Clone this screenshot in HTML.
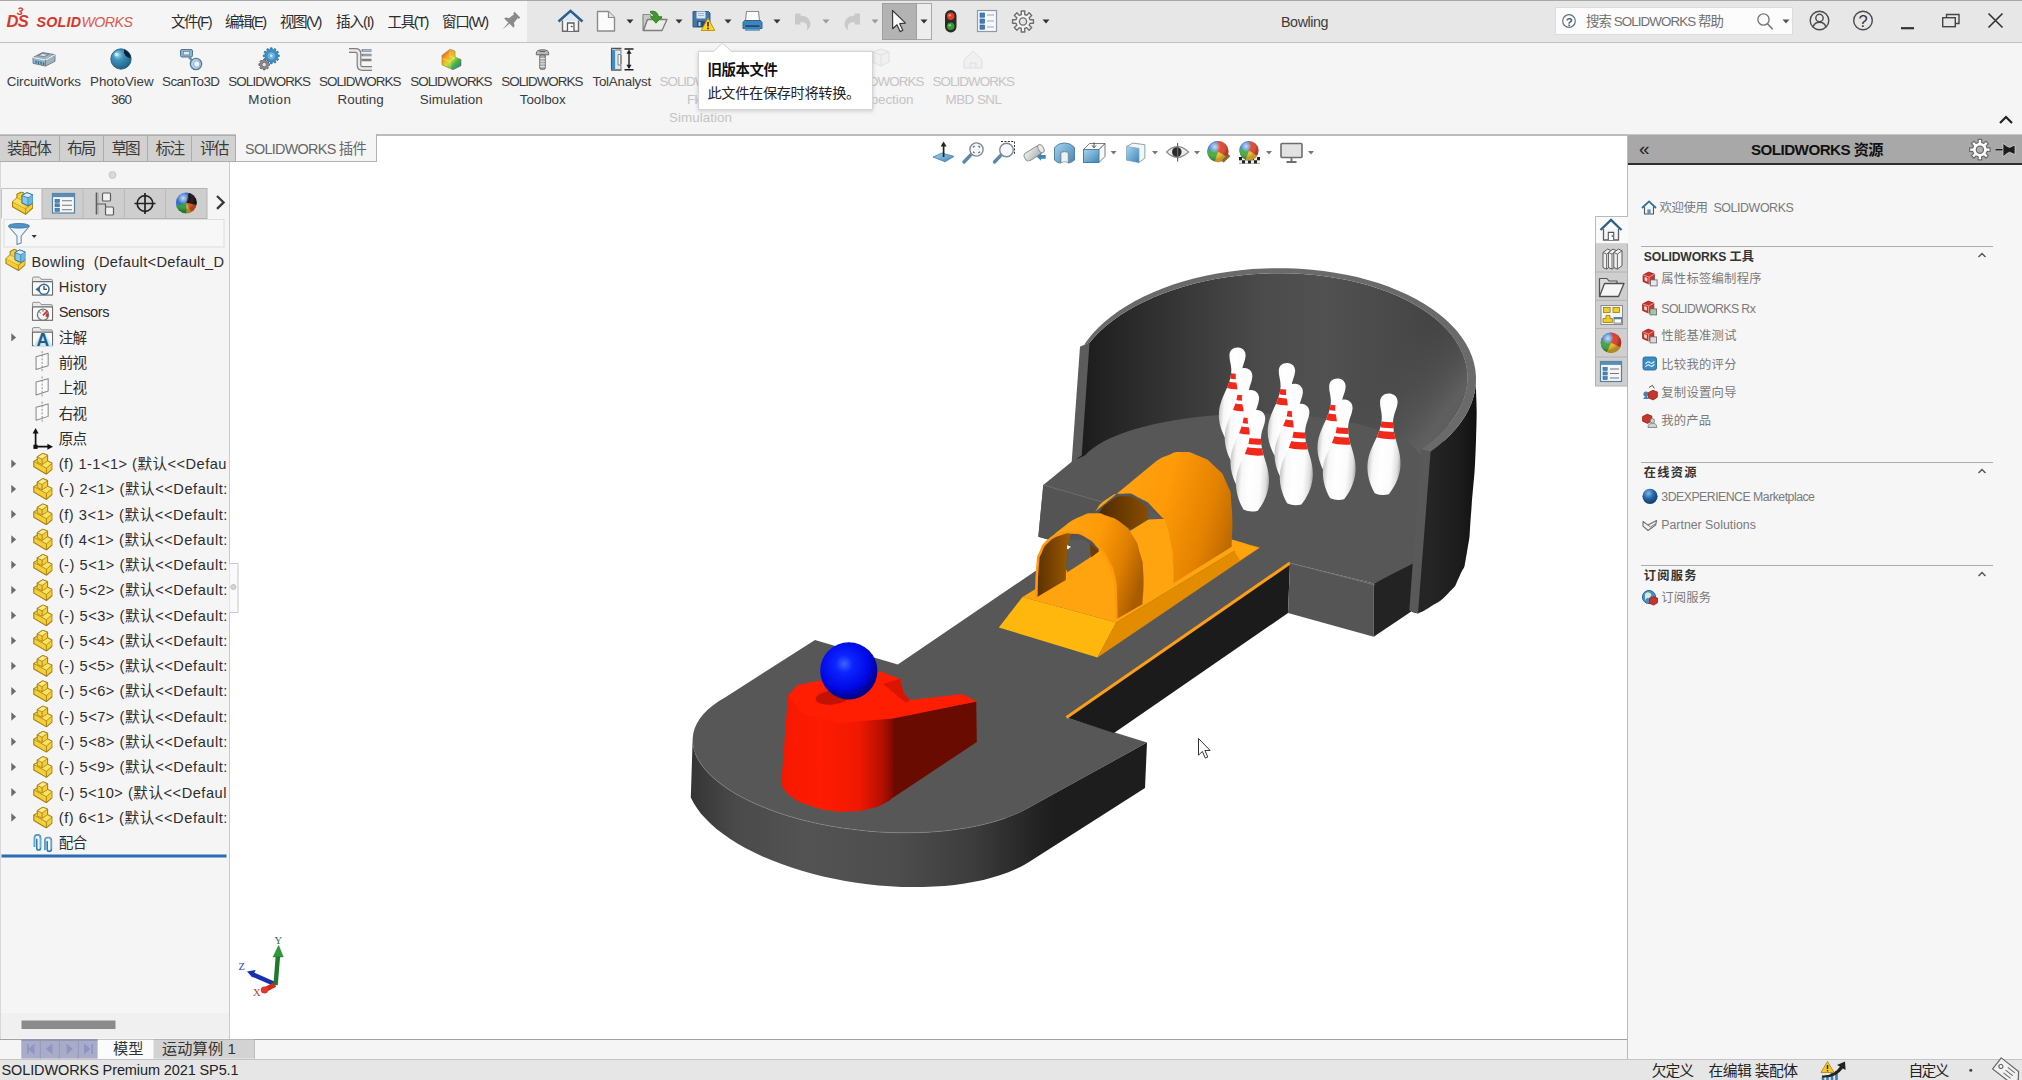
<!DOCTYPE html>
<html lang="zh-CN">
<head>
<meta charset="utf-8">
<title>SOLIDWORKS Premium 2021 - Bowling</title>
<style>
*{box-sizing:border-box;margin:0;padding:0}
html,body{width:2022px;height:1080px;overflow:hidden;background:#fff}
body{position:relative;font-family:"Liberation Sans","Noto Sans CJK SC",sans-serif;color:#333;font-size:14px}
.abs{position:absolute}
svg{position:absolute;overflow:visible}
.t{position:absolute;white-space:pre;line-height:20px;height:20px;display:block}
#titlebar{left:0;top:0;width:2022px;height:43px;background:#e7e7e7;border-top:1px solid #a8a8a8;border-bottom:1px solid #c2c2c2}
#titleleft{left:0;top:1px;width:527px;height:41px;background:#f5f5f5}
#search{left:1555px;top:7px;width:238px;height:28px;background:#fcfcfc;border:1px solid #dcdcdc}
#ribbon{left:0;top:43px;width:2022px;height:92px;background:#f5f5f5;border-bottom:1px solid #c6c6c6}
#tabrow{left:0;top:135px;width:230px;height:27px;background:#f5f5f5}
.tab{position:absolute;top:135px;height:27px;background:#d1d1d1;border:1px solid #acacac;border-left:none}
.tab.act{background:#f5f5f5;border-top:none;border-color:#b4b4b4;top:134px;height:28px}
#left{left:0;top:162px;width:230px;height:877px;background:#f5f5f5;border-right:1px solid #cacaca;border-left:1px solid #d8d8d8}
#view{left:230px;top:135px;width:1397px;height:904px;background:#fff}
#viewtop{left:376px;top:134px;width:1252px;height:2px;background:#bcbcbc}
#right{left:1627px;top:135px;width:395px;height:924px;background:#f6f6f6;border-left:1px solid #b9b9b9}
#rhead{left:1628px;top:135px;width:394px;height:30px;background:#a8a8a8;border-bottom:2px solid #2e2e2e}
.rsec{position:absolute;left:1641px;width:352px;height:1px;background:#adadad}
#btabs{left:0;top:1039px;width:1627px;height:20px;background:#f5f5f5;border-top:1px solid #a2a2a2}
#status{left:0;top:1059px;width:2022px;height:21px;background:#e6e6e6;border-top:1px solid #c4c4c4}
</style>
</head>
<body>
<div id="view" class="abs"></div>
<svg id="model" class="abs" style="left:0;top:0" width="2022" height="1080" viewBox="0 0 2022 1080"><defs>
<linearGradient id="gside" gradientUnits="userSpaceOnUse" x1="691" y1="0" x2="1147" y2="0"><stop offset="0" stop-color="#353535"/><stop offset="0.1" stop-color="#4a4a4a"/><stop offset="0.25" stop-color="#535353"/><stop offset="0.45" stop-color="#4d4d4d"/><stop offset="0.62" stop-color="#3c3c3c"/><stop offset="0.74" stop-color="#262626"/><stop offset="0.8" stop-color="#1d1d1d"/><stop offset="1" stop-color="#1d1d1d"/></linearGradient>
<linearGradient id="gwall" gradientUnits="userSpaceOnUse" x1="1085" y1="0" x2="1468" y2="0"><stop offset="0" stop-color="#1d1d1d"/><stop offset="0.12" stop-color="#2a2a2a"/><stop offset="0.28" stop-color="#3a3a3a"/><stop offset="0.45" stop-color="#4a4a4a"/><stop offset="0.62" stop-color="#515151"/><stop offset="0.85" stop-color="#474747"/><stop offset="1" stop-color="#3a3a3a"/></linearGradient>
<linearGradient id="gwallr" gradientUnits="userSpaceOnUse" x1="1400" y1="330" x2="1468" y2="380"><stop offset="0" stop-color="#4a4a4a" stop-opacity="0"/><stop offset="0.7" stop-color="#5a5a5a" stop-opacity="0.6"/><stop offset="1" stop-color="#626262" stop-opacity="0.9"/></linearGradient>
<linearGradient id="gwout" gradientUnits="userSpaceOnUse" x1="1430" y1="0" x2="1478" y2="0"><stop offset="0" stop-color="#252525"/><stop offset="0.6" stop-color="#1c1c1c"/><stop offset="1" stop-color="#101010"/></linearGradient>
<linearGradient id="gred" gradientUnits="userSpaceOnUse" x1="781" y1="0" x2="893" y2="0"><stop offset="0" stop-color="#f51800"/><stop offset="0.35" stop-color="#ff1c00"/><stop offset="0.7" stop-color="#f01800"/><stop offset="0.9" stop-color="#b51000"/><stop offset="1" stop-color="#7c0a00"/></linearGradient>
<radialGradient id="gball" cx="42%" cy="38%" r="62%"><stop offset="0" stop-color="#3f63ff"/><stop offset="0.25" stop-color="#0c24ff"/><stop offset="0.7" stop-color="#0008e6"/><stop offset="1" stop-color="#000080"/></radialGradient>
<linearGradient id="gor1" gradientUnits="userSpaceOnUse" x1="1095" y1="500" x2="1235" y2="540"><stop offset="0" stop-color="#ffa516"/><stop offset="0.45" stop-color="#ff9a08"/><stop offset="0.78" stop-color="#e48200"/><stop offset="1" stop-color="#b86600"/></linearGradient>
<linearGradient id="gor2" gradientUnits="userSpaceOnUse" x1="1050" y1="540" x2="1145" y2="570"><stop offset="0" stop-color="#ffa516"/><stop offset="0.45" stop-color="#ff9a08"/><stop offset="0.75" stop-color="#e08000"/><stop offset="1" stop-color="#a85c00"/></linearGradient>
<linearGradient id="gin1" gradientUnits="userSpaceOnUse" x1="1038" y1="0" x2="1070" y2="0"><stop offset="0" stop-color="#5e3200"/><stop offset="1" stop-color="#9c5a00"/></linearGradient>
<linearGradient id="gin2" gradientUnits="userSpaceOnUse" x1="1098" y1="0" x2="1150" y2="0"><stop offset="0" stop-color="#4e2a00"/><stop offset="1" stop-color="#8c4e00"/></linearGradient>
<linearGradient id="gpin" x1="0" y1="0" x2="1" y2="0"><stop offset="0" stop-color="#c6c6c6"/><stop offset="0.16" stop-color="#f7f7f7"/><stop offset="0.4" stop-color="#ffffff"/><stop offset="0.72" stop-color="#fbfbfb"/><stop offset="0.9" stop-color="#dedede"/><stop offset="1" stop-color="#a8a8a8"/></linearGradient>
<clipPath id="pinclip"><path id="pinpath" d="M0 0C5.2 0 8.8 3.4 8.8 8.6C8.8 14 6.2 18.5 5.8 24.5C5.4 30 6.4 36 9.2 44C13 54 16.5 62 16.5 72C16.5 84 11 95 7 100.5Q0 103 -7 100.5C-11 95 -16.5 84 -16.5 72C-16.5 62 -13 54 -9.2 44C-6.4 36 -5.4 30 -5.8 24.5C-6.2 18.5 -8.8 14 -8.8 8.6C-8.8 3.4 -5.2 0 0 0Z"/></clipPath>
<g id="pin"><path d="M0 0C5.2 0 8.8 3.4 8.8 8.6C8.8 14 6.2 18.5 5.8 24.5C5.4 30 6.4 36 9.2 44C13 54 16.5 62 16.5 72C16.5 84 11 95 7 100.5Q0 103 -7 100.5C-11 95 -16.5 84 -16.5 72C-16.5 62 -13 54 -9.2 44C-6.4 36 -5.4 30 -5.8 24.5C-6.2 18.5 -8.8 14 -8.8 8.6C-8.8 3.4 -5.2 0 0 0Z" fill="url(#gpin)"/><g clip-path="url(#pinclip)"><path d="M-12 27.5q12 2.4 24 0v6q-12 2.4-24 0zM-12 37q12 2.6 24 0v7.4q-12 2.6-24 0z" fill="#f2281a"/></g></g>
</defs><path d="M815 640 L897.8 664.4 L1071.8 546.3 L1038.3 536.7 L1043.3 485 L1071.7 461.7 L1092 400 L1200 335 L1400 335 L1455 400 L1428 500 L1416 564 L1373.7 583.5 L1290 563 L1066.5 717.5 L1147 742.5 L1028.2 808.1 L1021.2 811.7 L1013.6 815.0 L1005.5 818.1 L996.8 820.9 L987.6 823.5 L978.0 825.7 L967.9 827.7 L957.5 829.3 L946.8 830.7 L935.7 831.7 L924.5 832.4 L913.0 832.7 L901.4 832.8 L889.6 832.5 L877.9 831.9 L866.1 830.9 L854.3 829.6 L842.7 828.1 L831.2 826.2 L819.8 824.0 L808.7 821.5 L797.9 818.7 L787.4 815.7 L777.3 812.4 L767.6 808.8 L758.3 805.1 L749.5 801.1 L741.3 796.9 L733.6 792.5 L726.5 788.0 L720.0 783.3 L714.1 778.5 L708.9 773.6 L704.4 768.6 L700.6 763.5 L697.5 758.4 L695.2 753.3 L693.6 748.2 L692.8 743.1 L692.7 738.0 L693.4 733.0 L694.8 728.1 L697.0 723.2 L699.9 718.5 L703.5 714.0 L707.9 709.6 L712.9 705.4 L718.6 701.3 L725.0 697.5 Z" fill="#575757"/><path d="M692.7 738.0 L690.8 797.5 L693.5 802.8 L696.9 808.1 L700.8 813.4 L705.5 818.6 L710.7 823.8 L716.5 828.9 L722.9 833.8 L729.9 838.7 L737.4 843.4 L745.3 847.9 L753.8 852.2 L762.6 856.4 L771.9 860.3 L781.6 864.0 L791.6 867.5 L801.8 870.8 L812.4 873.7 L823.1 876.4 L834.1 878.8 L845.2 880.9 L856.3 882.8 L867.6 884.3 L878.8 885.5 L890.1 886.3 L901.2 886.9 L912.3 887.1 L923.2 887.1 L933.9 886.6 L944.4 885.9 L954.6 884.9 L964.6 883.5 L974.2 881.8 L983.4 879.9 L992.2 877.6 L1000.5 875.0 L1008.4 872.2 L1015.8 869.1 L1022.7 865.7 L1029.0 862.1 L1145 788 L1147 742.5 L1028.2 808.1 L1021.2 811.7 L1013.6 815.0 L1005.5 818.1 L996.8 820.9 L987.6 823.5 L978.0 825.7 L967.9 827.7 L957.5 829.3 L946.8 830.7 L935.7 831.7 L924.5 832.4 L913.0 832.7 L901.4 832.8 L889.6 832.5 L877.9 831.9 L866.1 830.9 L854.3 829.6 L842.7 828.1 L831.2 826.2 L819.8 824.0 L808.7 821.5 L797.9 818.7 L787.4 815.7 L777.3 812.4 L767.6 808.8 L758.3 805.1 L749.5 801.1 L741.3 796.9 L733.6 792.5 L726.5 788.0 L720.0 783.3 L714.1 778.5 L708.9 773.6 L704.4 768.6 L700.6 763.5 L697.5 758.4 L695.2 753.3 L693.6 748.2 L692.8 743.1 L692.7 738.0 Z" fill="url(#gside)"/><path d="M1005.5 818.1 L996.8 820.9 L987.6 823.5 L978.0 825.7 L967.9 827.7 L957.5 829.3 L946.8 830.7 L935.7 831.7 L924.5 832.4 L913.0 832.7 L901.4 832.8 L889.6 832.5 L877.9 831.9 L866.1 830.9 L854.3 829.6 L842.7 828.1 L831.2 826.2 L819.8 824.0 L808.7 821.5 L797.9 818.7 L787.4 815.7 L777.3 812.4 L767.6 808.8 L758.3 805.1 L749.5 801.1 L741.3 796.9 L733.6 792.5 L726.5 788.0 L720.0 783.3 L714.1 778.5 L708.9 773.6 L704.4 768.6 L700.6 763.5 L697.5 758.4 L695.2 753.3" fill="none" stroke="#8c8c8c" stroke-opacity="0.5" stroke-width="1"/><path d="M1066.5 717.5L1290 563L1288 613L1114 733Z" fill="#1b1b1b"/><path d="M1066.5 717.5L1290 563" stroke="#ff9d14" stroke-width="3"/><path d="M1290 563L1373.7 583.5L1373.7 636.7L1288 613Z" fill="#555"/><path d="M1373.7 583.5L1414 563L1412 611L1373.7 636.7Z" fill="#232323"/><path d="M1290 563L1375 585" stroke="#777" stroke-width="0.8"/><path d="M1043.3 485L1130 510L1130 566L1071.8 546.3L1038.3 536.7Z" fill="#545454"/><path d="M1043.3 485L1130 510" stroke="#747474" stroke-width="0.8"/><path d="M1089.5 342.8 L1094.5 336.9 L1100.0 331.2 L1106.2 325.7 L1112.9 320.4 L1120.1 315.3 L1127.8 310.4 L1136.0 305.8 L1144.7 301.4 L1153.8 297.3 L1163.2 293.4 L1173.0 289.9 L1183.2 286.7 L1193.6 283.8 L1204.3 281.3 L1215.2 279.0 L1226.3 277.2 L1237.5 275.7 L1248.9 274.5 L1260.3 273.7 L1271.7 273.3 L1283.2 273.2 L1294.6 273.6 L1305.9 274.2 L1317.1 275.3 L1328.1 276.7 L1338.9 278.4 L1349.5 280.5 L1359.9 283.0 L1369.9 285.8 L1379.6 288.9 L1388.9 292.3 L1397.8 296.0 L1406.3 300.1 L1414.4 304.4 L1421.9 308.9 L1429.0 313.7 L1435.5 318.8 L1441.4 324.0 L1446.8 329.5 L1451.6 335.1 L1455.8 340.9 L1459.3 346.9 L1462.2 352.9 L1464.5 359.1 L1466.1 365.3 L1467.1 371.6 L1467.4 377.9 L1467.0 384.3 L1466.0 390.6 L1464.3 396.9 L1462.0 403.2 L1459.0 409.4 L1455.3 415.5 L1451.1 421.5 L1446.2 427.4 L1440.8 433.1 L1434.8 438.7 L1428.2 444.0 L1421.1 449.2 L1416.0 560.0 L1421.7 457.5 L1419.4 453.8 L1416.3 450.2 L1412.4 446.7 L1407.7 443.3 L1402.3 440.0 L1396.1 436.8 L1389.2 433.8 L1381.7 431.0 L1373.5 428.3 L1364.7 425.8 L1355.3 423.5 L1345.5 421.5 L1335.2 419.7 L1324.4 418.1 L1313.4 416.7 L1302.0 415.6 L1290.3 414.8 L1278.5 414.2 L1266.6 413.8 L1254.5 413.8 L1242.5 414.0 L1230.5 414.4 L1218.6 415.1 L1206.8 416.1 L1195.3 417.3 L1184.1 418.8 L1173.1 420.5 L1162.6 422.5 L1152.5 424.6 L1142.9 427.0 L1133.8 429.6 L1125.2 432.3 L1117.3 435.2 L1110.1 438.3 L1103.5 441.6 L1097.7 444.9 L1092.6 448.4 L1088.3 451.9 L1084.8 455.6 L1077.0 459.0 L1085.0 345.0Z" fill="url(#gwall)"/><path d="M1089.5 342.8 L1094.5 336.9 L1100.0 331.2 L1106.2 325.7 L1112.9 320.4 L1120.1 315.3 L1127.8 310.4 L1136.0 305.8 L1144.7 301.4 L1153.8 297.3 L1163.2 293.4 L1173.0 289.9 L1183.2 286.7 L1193.6 283.8 L1204.3 281.3 L1215.2 279.0 L1226.3 277.2 L1237.5 275.7 L1248.9 274.5 L1260.3 273.7 L1271.7 273.3 L1283.2 273.2 L1294.6 273.6 L1305.9 274.2 L1317.1 275.3 L1328.1 276.7 L1338.9 278.4 L1349.5 280.5 L1359.9 283.0 L1369.9 285.8 L1379.6 288.9 L1388.9 292.3 L1397.8 296.0 L1406.3 300.1 L1414.4 304.4 L1421.9 308.9 L1429.0 313.7 L1435.5 318.8 L1441.4 324.0 L1446.8 329.5 L1451.6 335.1 L1455.8 340.9 L1459.3 346.9 L1462.2 352.9 L1464.5 359.1 L1466.1 365.3 L1467.1 371.6 L1467.4 377.9 L1467.0 384.3 L1466.0 390.6 L1464.3 396.9 L1462.0 403.2 L1459.0 409.4 L1455.3 415.5 L1451.1 421.5 L1446.2 427.4 L1440.8 433.1 L1434.8 438.7 L1428.2 444.0 L1421.1 449.2 L1416.0 560.0 L1421.7 457.5 L1419.4 453.8 L1416.3 450.2 L1412.4 446.7 L1407.7 443.3 L1402.3 440.0 L1396.1 436.8 L1389.2 433.8 L1381.7 431.0 L1373.5 428.3 L1364.7 425.8 L1355.3 423.5 L1345.5 421.5 L1335.2 419.7 L1324.4 418.1 L1313.4 416.7 L1302.0 415.6 L1290.3 414.8 L1278.5 414.2 L1266.6 413.8 L1254.5 413.8 L1242.5 414.0 L1230.5 414.4 L1218.6 415.1 L1206.8 416.1 L1195.3 417.3 L1184.1 418.8 L1173.1 420.5 L1162.6 422.5 L1152.5 424.6 L1142.9 427.0 L1133.8 429.6 L1125.2 432.3 L1117.3 435.2 L1110.1 438.3 L1103.5 441.6 L1097.7 444.9 L1092.6 448.4 L1088.3 451.9 L1084.8 455.6 L1077.0 459.0 L1085.0 345.0Z" fill="url(#gwallr)"/><path d="M1476.0 376.2 L1475.9 382.9 L1475.2 389.6 L1473.7 396.3 L1471.5 402.9 L1468.7 409.5 L1465.2 415.9 L1461.0 422.3 L1456.1 428.5 L1450.6 434.5 L1444.6 440.3 L1437.9 446.0 L1430.6 451.4 L1424 452 L1412 612 L1418 613.5 C1422.0 611.3 1420.1 613.6 1430.0 607.0 C1439.9 600.4 1437.9 604.0 1447.8 593.7 C1457.7 583.4 1453.2 589.9 1459.6 576.0 C1466.0 562.1 1463.0 574.7 1467.0 552.0 C1471.0 529.3 1468.5 545.1 1471.5 507.8 C1474.5 470.5 1474.5 481.2 1476.0 440.0 C1477.5 398.8 1476.0 402.8 1476.0 384.2 Z" fill="url(#gwout)"/><path d="M1421.1 449.2L1430.6 451.4L1418 613.5L1409.3 610.5Z" fill="#595959"/><path d="M1080.0 346.7 L1083.2 346.2 L1087.5 339.9 L1092.5 333.8 L1098.2 327.8 L1104.4 322.0 L1111.2 316.4 L1118.6 311.0 L1126.6 305.9 L1135.0 301.0 L1143.9 296.5 L1153.3 292.2 L1163.1 288.2 L1173.3 284.6 L1183.8 281.3 L1194.7 278.3 L1205.8 275.7 L1217.2 273.5 L1228.7 271.7 L1240.4 270.2 L1252.3 269.1 L1264.2 268.5 L1276.1 268.2 L1288.0 268.3 L1299.9 268.8 L1311.7 269.7 L1323.4 271.0 L1334.8 272.7 L1346.1 274.7 L1357.1 277.1 L1367.9 279.9 L1378.3 283.1 L1388.3 286.6 L1397.9 290.4 L1407.1 294.5 L1415.9 299.0 L1424.1 303.7 L1431.8 308.7 L1439.0 314.0 L1445.6 319.5 L1451.6 325.2 L1457.0 331.1 L1461.7 337.2 L1465.8 343.4 L1469.2 349.8 L1471.9 356.3 L1474.0 362.9 L1475.3 369.5 L1476.0 376.2 L1475.9 382.9 L1475.2 389.6 L1473.7 396.3 L1471.5 402.9 L1468.7 409.5 L1465.2 415.9 L1461.0 422.3 L1456.1 428.5 L1450.6 434.5 L1444.6 440.3 L1437.9 446.0 L1430.6 451.4 L1421.1 449.2 L1428.2 444.0 L1434.8 438.7 L1440.8 433.1 L1446.2 427.4 L1451.1 421.5 L1455.3 415.5 L1459.0 409.4 L1462.0 403.2 L1464.3 396.9 L1466.0 390.6 L1467.0 384.3 L1467.4 377.9 L1467.1 371.6 L1466.1 365.3 L1464.5 359.1 L1462.2 352.9 L1459.3 346.9 L1455.8 340.9 L1451.6 335.1 L1446.8 329.5 L1441.4 324.0 L1435.5 318.8 L1429.0 313.7 L1421.9 308.9 L1414.4 304.4 L1406.3 300.1 L1397.8 296.0 L1388.9 292.3 L1379.6 288.9 L1369.9 285.8 L1359.9 283.0 L1349.5 280.5 L1338.9 278.4 L1328.1 276.7 L1317.1 275.3 L1305.9 274.2 L1294.6 273.6 L1283.2 273.2 L1271.7 273.3 L1260.3 273.7 L1248.9 274.5 L1237.5 275.7 L1226.3 277.2 L1215.2 279.0 L1204.3 281.3 L1193.6 283.8 L1183.2 286.7 L1173.0 289.9 L1163.2 293.4 L1153.8 297.3 L1144.7 301.4 L1136.0 305.8 L1127.8 310.4 L1120.1 315.3 L1112.9 320.4 L1106.2 325.7 L1100.0 331.2 L1094.5 336.9 L1089.5 342.8Z" fill="#6a6a6a"/><path d="M1080 346.7 L1089.5 342.8 L1081.7 455.5L1071.7 461.7Z" fill="#5c5c5c"/><use href="#pin" transform="translate(1238.0 347.5) rotate(3.4) scale(0.92)"/><use href="#pin" transform="translate(1287.5 363.0) rotate(3.8) scale(0.93)"/><use href="#pin" transform="translate(1338.0 378.5) rotate(4.2) scale(0.94)"/><use href="#pin" transform="translate(1244.5 368.0) rotate(3.4) scale(0.95)"/><use href="#pin" transform="translate(1295.0 383.8) rotate(3.8) scale(0.96)"/><use href="#pin" transform="translate(1389.5 393.5) rotate(4.4) scale(1)"/><use href="#pin" transform="translate(1251.0 390.0) rotate(3.52) scale(0.98)"/><use href="#pin" transform="translate(1344.5 399.5) rotate(4.24) scale(0.99)"/><use href="#pin" transform="translate(1301.2 403.8) rotate(3.88) scale(1)"/><use href="#pin" transform="translate(1257.0 410.0) rotate(3.6) scale(1)"/><path d="M1022.5 597.0 L1116.2 622.5 L1246.2 543.8 L1153.8 516.2Z" fill="#ffa30f"/><path d="M998.8 627.5 L1022.5 597.0 L1116.2 622.5 L1097.5 657.5Z" fill="#ffb70d"/><path d="M1116.2 622.5 L1097.5 657.5 L1260.0 547.5 L1246.2 543.8Z" fill="#e48c00"/><path d="M1231.7 546.7 L1232.5 540.0 L1258.7 548.0 L1240.0 560.3Z" fill="#ffa30f"/><path d="M1095.0 511.7 C1098.9 507.5 1097.2 505.2 1106.7 499.2 C1116.1 493.2 1112.2 493.9 1123.3 493.7 C1134.4 493.4 1129.4 492.9 1140.0 498.3 C1150.6 503.8 1146.7 501.1 1155.0 510.0 C1163.3 518.9 1159.7 513.9 1165.0 525.0 C1170.3 536.1 1168.1 530.0 1170.8 543.3 C1173.6 556.7 1172.5 551.7 1173.3 565.0 C1174.2 578.3 1173.3 577.2 1173.3 583.3 L1231.7 546.7 C1231.7 533.3 1233.3 527.8 1231.7 506.7 C1230.0 485.6 1232.2 496.7 1226.7 483.3 C1221.1 470.0 1224.4 475.8 1215.0 466.7 C1205.6 457.5 1209.4 460.7 1198.3 455.8 C1187.2 450.9 1192.2 452.0 1181.7 452.0 C1171.1 452.0 1175.0 452.9 1166.7 455.8 C1158.3 458.8 1160.0 459.2 1156.7 460.8 Z" fill="url(#gor1)"/><path d="M1135.0 530.0 L1148.3 519.7 L1164.2 518.7 L1169.2 533.3 L1172.0 556.7 L1172.8 583.0 L1142.5 604.2 L1142.5 573.3 L1140.0 553.3 L1134.2 537.5Z" fill="#ffa30f"/><path d="M1098.0 514.2 C1102.0 509.9 1101.0 507.3 1110.0 501.3 C1119.0 495.4 1115.6 496.7 1125.0 496.3 C1134.4 496.0 1130.6 495.8 1138.3 500.3 C1146.1 504.9 1145.0 506.8 1148.3 510.0 L1148.0 519.3 L1131.7 529.2 L1121.7 523.3 L1106.7 515.8 Z" fill="url(#gin2)"/><path d="M1148.7 509.0 L1164.2 518.7 L1148.3 519.5Z" fill="#5b5b5b"/><path d="M1048.3 540.8 C1052.2 538.6 1051.7 536.9 1060.0 534.2 C1068.3 531.4 1064.4 531.7 1073.3 532.5 C1082.2 533.3 1078.3 531.9 1086.7 536.7 C1095.0 541.4 1091.1 538.3 1098.3 546.7 C1105.6 555.0 1103.1 551.1 1108.3 561.7 C1113.6 572.2 1111.7 566.1 1114.2 578.3 C1116.7 590.6 1115.2 584.7 1115.8 598.3 C1116.5 611.9 1116.1 612.2 1116.2 619.2 L1142.5 604.2 C1142.8 593.9 1144.2 590.3 1143.3 573.3 C1142.5 556.4 1143.3 565.6 1140.0 553.3 C1136.7 541.1 1139.4 546.7 1133.3 536.7 C1127.2 526.7 1130.6 530.3 1121.7 523.3 C1112.8 516.4 1115.6 519.2 1106.7 515.8 C1097.8 512.5 1103.9 513.1 1095.0 513.3 C1086.1 513.6 1091.1 511.7 1080.0 516.7 C1068.9 521.7 1072.2 520.3 1061.7 528.3 C1051.1 536.4 1052.8 536.7 1048.3 540.8 Z" fill="url(#gor2)"/><path d="M1068.3 540.0 L1083.3 539.5 L1090.0 543.7 L1090.8 557.0 L1067.0 572.5Z" fill="#5b5b5b"/><path d="M1090.0 543.7 L1099.2 551.3 L1092.0 556.7 L1090.8 557.0Z" fill="#6d3c00"/><path d="M1036.3 597.5 C1036.7 587.2 1036.0 581.9 1037.5 566.7 C1039.0 551.4 1037.2 560.3 1040.8 551.7 C1044.4 543.1 1041.9 546.7 1048.3 540.8 C1054.7 535.0 1052.5 536.8 1060.0 534.2 C1067.5 531.5 1067.2 533.3 1070.8 532.8 L1067.0 548.3 L1065.8 580.0 Z" fill="url(#gin1)"/><path d="M1067.0 545.3 L1071.0 546.8 L1068.0 549.3Z" fill="#fff"/><path d="M1036.3 597.5 C1036.7 587.2 1036.0 581.9 1037.5 566.7 C1039.0 551.4 1037.2 560.3 1040.8 551.7 C1044.4 543.1 1041.9 546.7 1048.3 540.8 C1054.7 535.0 1051.7 536.9 1060.0 534.2 C1068.3 531.4 1064.4 531.7 1073.3 532.5 C1082.2 533.3 1078.3 531.9 1086.7 536.7 C1095.0 541.4 1091.1 538.3 1098.3 546.7 C1105.6 555.0 1103.1 551.1 1108.3 561.7 C1113.6 572.2 1111.7 566.1 1114.2 578.3 C1116.7 590.6 1115.2 584.7 1115.8 598.3 C1116.5 611.9 1116.1 612.2 1116.2 619.2" fill="none" stroke="#ff9a0a" stroke-width="2.6"/><path d="M892.5 718.0 L976.2 701.5 L976.8 742.0 L892.5 798.0Z" fill="#6a0b00"/><path d="M788.0 695.0 L781.2 785.0 C785.0 789.2 782.9 790.7 792.5 797.5 C802.1 804.3 797.5 801.2 810.0 805.5 C822.5 809.8 816.7 808.5 830.0 810.5 C843.3 812.5 836.7 812.1 850.0 811.5 C863.3 810.9 858.3 811.6 870.0 808.8 C881.7 805.9 877.3 806.8 885.0 803.0 C892.7 799.2 890.3 799.3 893.0 797.5 L893.0 718.0 Z" fill="url(#gred)"/><path d="M788.0 695.5 L797.5 685.0 L820.0 680.5 L880.0 671.2 L900.0 678.8 L903.8 693.8 L910.0 700.0 L962.5 694.0 L976.8 701.5 L893.0 718.5 L840.0 723.0 L805.0 715.0Z" fill="#ff1e02"/><path d="M883.0 684.0 L900.0 678.8 L903.8 693.8 L910.0 700.0 L906.2 703.0Z" fill="#d91400"/><ellipse cx="832.5" cy="697.5" rx="17" ry="7" fill="#c41200" transform="rotate(-6 832.5 697.5)"/><circle cx="848.8" cy="670.8" r="28.6" fill="url(#gball)"/></svg>
<svg class="abs" style="left:0;top:0" width="2022" height="1080" viewBox="0 0 2022 1080"><g><path d="M274.6 984l-22-9.5" stroke="#1a2fb0" stroke-width="4.6"/><path d="M247 971.5l8.6-1.4-3.2 7.4z" fill="#1a2fb0"/><path d="M275 984.5l-9.5 5" stroke="#d02a1c" stroke-width="5"/><circle cx="264.4" cy="990" r="3.6" fill="#e0382a"/><path d="M275.6 985l2.4-30" stroke="#1e7a2a" stroke-width="4.4"/><path d="M278.6 945.5l-5.4 11.4h10z" fill="#2f9a3a" stroke="#1e7a2a" stroke-width="0.6"/></g><path d="M1198.5 738.5v16.6l3.9-3.6 2.9 6.6 2.5-1.1-2.9-6.5h5.3z" fill="#fff" stroke="#333" stroke-width="1" stroke-linejoin="round"/></svg>
<span class="t" style="left:274.5px;top:931.0px;font-size:10.5px;color:#2c6a33;font-family:'Liberation Serif',serif;">Y</span>
<span class="t" style="left:238.6px;top:957.4px;font-size:10.5px;color:#2a3fb8;font-family:'Liberation Serif',serif;">Z</span>
<span class="t" style="left:253px;top:982.8px;font-size:10.5px;color:#c8392b;font-family:'Liberation Serif',serif;">X</span>
<div id="titlebar" class="abs"></div><div id="titleleft" class="abs"></div><div id="search" class="abs"></div>
<span class="t" style="left:17px;top:0.7px;font-size:11px;color:#d43a2f;font-weight:bold;font-style:italic;transform:rotate(8deg);">3</span>
<span class="t" style="left:6.5px;top:11.3px;font-size:16.5px;color:#d43a2f;font-weight:bold;font-style:italic;letter-spacing:-0.6px;">DS</span>
<span class="t" style="left:36.5px;top:12.3px;font-size:14.2px;color:#d9342a;font-weight:bold;font-style:italic;letter-spacing:0.29px;">SOLID</span>
<span class="t" style="left:81.5px;top:12.3px;font-size:14.2px;color:#dc5a50;font-style:italic;letter-spacing:-0.53px;">WORKS</span>
<span class="t" style="left:171px;top:12.2px;font-size:14.6px;color:#2c2c2c;letter-spacing:-1.58px;">文件(F)</span>
<span class="t" style="left:225px;top:12.2px;font-size:14.6px;color:#2c2c2c;letter-spacing:-1.66px;">编辑(E)</span>
<span class="t" style="left:280px;top:12.2px;font-size:14.6px;color:#2c2c2c;letter-spacing:-1.54px;">视图(V)</span>
<span class="t" style="left:336px;top:12.2px;font-size:14.6px;color:#2c2c2c;letter-spacing:-1.12px;">插入(I)</span>
<span class="t" style="left:387.5px;top:12.2px;font-size:14.6px;color:#2c2c2c;letter-spacing:-1.46px;">工具(T)</span>
<span class="t" style="left:442px;top:12.2px;font-size:14.6px;color:#2c2c2c;letter-spacing:-1.42px;">窗口(W)</span>
<svg class="abs" style="left:0;top:0" width="2022" height="43" viewBox="0 0 2022 43"><g transform="translate(511,21) rotate(45)" fill="#8a8a8a"><path d="M-4 -9h8v2h-1.3l0.8 6.5q3 1.2 3.2 3.5h-13.4q0.2-2.3 3.2-3.5l0.8-6.5h-1.3z"/><path d="M-0.8 3h1.6l-0.8 9z"/></g><g><path d="M562.5 20.5v10.8h16v-10.8" fill="#f4f7fa" stroke="#6b6b6b" stroke-width="1.4"/><path d="M558.5 21.5l12-10.5 12 10.5" fill="none" stroke="#2f5f8d" stroke-width="2.6" stroke-linejoin="miter"/><path d="M570.5 12.8l-7.3 6.6v1.6h14.6v-1.6z" fill="#dce9f5"/><path d="M567.5 31v-8h6.5v8" fill="#fff" stroke="#5a5a5a" stroke-width="1.3"/><path d="M570.8 26.5h1.8" stroke="#444" stroke-width="1.3"/></g><path d="M597.5 11.5h11l6 6v13.5h-17z" fill="#fbfbfb" stroke="#8b8b8b" stroke-width="1.4" stroke-linejoin="round"/><path d="M608.5 11.5v6h6" fill="#e4e4e4" stroke="#8b8b8b" stroke-width="1.2"/><path d="M626.5 19.5h7l-3.5 4z" fill="#333"/><path d="M643 14.5h7l2 2.5h9.5v3h-14l-4.5 10.5z" fill="#c9c9c9" stroke="#8a8a8a" stroke-width="1.2" stroke-linejoin="round"/><path d="M647.5 19.5h19.5l-5 11h-18.5z" fill="#e9ede6" stroke="#7d7d7d" stroke-width="1.3" stroke-linejoin="round"/><path d="M650.5 11.2q7-0.8 8 5.6h3.3l-5.8 6.4-5.6-6.4h3.4q-0.4-3.4-3.3-3.9z" fill="#3d9a2d" stroke="#2b7a1f" stroke-width="0.8"/><path d="M675.5 19.5h7l-3.5 4z" fill="#333"/><path d="M693 11.5h15.5l1.5 1.5v14h-17z" fill="#3f78a8" stroke="#2d5f8b" stroke-width="1"/><rect x="696.5" y="11.5" width="9" height="7" fill="#dfe6ee"/><path d="M698 13.5h6M698 15.5h6" stroke="#9bb0c4" stroke-width="0.9"/><rect x="697" y="21" width="8" height="6" fill="#2a4f73"/><rect x="698.5" y="22" width="2" height="4" fill="#c8d4e0"/><path d="M708 18.2l6.8 12.3h-13.6z" fill="#ffd32a" stroke="#b98d00" stroke-width="0.9" stroke-linejoin="round"/><path d="M708 22v4.4" stroke="#222" stroke-width="1.5"/><circle cx="708" cy="28.4" r="0.9" fill="#222"/><path d="M724.5 19.5h7l-3.5 4z" fill="#333"/><path d="M746.5 11.5h12l1 9h-14z" fill="#fdfdfd" stroke="#8e8e8e" stroke-width="1.1"/><path d="M744.5 20.5h16l1.5 2v6h-19v-6z" fill="#3d86bd" stroke="#2a6593" stroke-width="1"/><rect x="745.5" y="25.2" width="14" height="1.8" fill="#1d4d75"/><rect x="745" y="28.5" width="15" height="2.3" fill="#5d9ccc"/><path d="M773.5 19.5h7l-3.5 4z" fill="#333"/><g fill="#c9c9c9"><path d="M795 13.5h5.5v2.2q8.5-0.6 10 7.8 0 4.2-3.6 6.8 1.2-3.2-0.2-5.6-1.8-2.8-6.2-2.6v2.4h-5.5z"/><path d="M860 13.5h-5.5v2.2q-8.5-0.6-10 7.8 0 4.2 3.6 6.8-1.2-3.2 0.2-5.6 1.8-2.8 6.2-2.6v2.4h5.5z"/></g><path d="M822.5 19.5h7l-3.5 4z" fill="#9a9a9a"/><path d="M871.5 19.5h7l-3.5 4z" fill="#9a9a9a"/><rect x="882.5" y="3.5" width="49" height="36" fill="#ededed" stroke="#a9a9a9"/><rect x="882.5" y="3.5" width="34" height="36" fill="#b3b3b3" stroke="#9f9f9f"/><path d="M892.5 10.5l0.2 18.2 4.3-3.9 3.1 6.8 2.7-1.3-3.1-6.6 5.8-0.6z" fill="#fcfcfc" stroke="#3a3a3a" stroke-width="1.2" stroke-linejoin="round"/><path d="M920.5 19.5h7l-3.5 4z" fill="#333"/><rect x="945" y="10" width="11.5" height="22.5" rx="5.7" fill="#2b2b22"/><circle cx="950.7" cy="16.2" r="3.7" fill="#e23b2e"/><circle cx="949.8" cy="15.2" r="1.3" fill="#ff8d7d"/><circle cx="950.7" cy="26.2" r="3.7" fill="#2e9a3c"/><circle cx="949.8" cy="25.2" r="1.3" fill="#7bd884"/><rect x="977.5" y="10.5" width="19" height="21" fill="#f6f8fb" stroke="#8d9aa8" stroke-width="1.2"/><g fill="#3d7fb6" stroke="#2a5f8c" stroke-width="0.6"><rect x="980" y="13" width="4.6" height="4.2"/><rect x="980" y="19" width="4.6" height="4.2"/><rect x="980" y="25" width="4.6" height="4.2"/></g><path d="M987 15h7M987 21h7M987 27h7" stroke="#9aa3ad" stroke-width="1.2"/><path d="M1033.44 19.68 L1033.44 23.32 L1030.00 23.18 L1029.14 25.26 L1031.67 27.60 L1029.10 30.17 L1026.76 27.64 L1024.68 28.50 L1024.82 31.94 L1021.18 31.94 L1021.32 28.50 L1019.24 27.64 L1016.90 30.17 L1014.33 27.60 L1016.86 25.26 L1016.00 23.18 L1012.56 23.32 L1012.56 19.68 L1016.00 19.82 L1016.86 17.74 L1014.33 15.40 L1016.90 12.83 L1019.24 15.36 L1021.32 14.50 L1021.18 11.06 L1024.82 11.06 L1024.68 14.50 L1026.76 15.36 L1029.10 12.83 L1031.67 15.40 L1029.14 17.74 L1030.00 19.82Z" fill="#f3f3f3" stroke="#6f6f6f" stroke-width="1.4" stroke-linejoin="round"/><circle cx="1023" cy="21.5" r="3.6" fill="#e7e7e7" stroke="#6f6f6f" stroke-width="1.4"/><path d="M1042.5 19.5h7l-3.5 4z" fill="#333"/><circle cx="1569" cy="21" r="6.3" fill="#fff" stroke="#5f6f82" stroke-width="1.2"/><circle cx="1763.5" cy="19.5" r="5.6" fill="none" stroke="#777" stroke-width="1.4"/><path d="M1767.5 23.8l5.2 5.4" stroke="#777" stroke-width="1.6"/><path d="M1782.5 19.5h7l-3.5 4z" fill="#555"/><circle cx="1819.5" cy="20.5" r="9.3" fill="none" stroke="#4a4a4a" stroke-width="1.4"/><circle cx="1819.5" cy="18" r="3.7" fill="none" stroke="#4a4a4a" stroke-width="1.4"/><path d="M1813.2 26.8q1.4-4.6 6.3-4.6t6.3 4.6" fill="none" stroke="#4a4a4a" stroke-width="1.4"/><circle cx="1863" cy="20.5" r="9.3" fill="none" stroke="#4a4a4a" stroke-width="1.4"/><path d="M1901 28.2h13" stroke="#333" stroke-width="2.2"/><path d="M1946.5 17.5v-3h12.5v9h-3.5" fill="none" stroke="#444" stroke-width="1.4"/><rect x="1942.7" y="17.7" width="12.6" height="9" fill="none" stroke="#444" stroke-width="1.4"/><path d="M1988.5 13.5l14 14M2002.5 13.5l-14 14" stroke="#333" stroke-width="1.6"/></svg>
<span class="t" style="left:1565.8px;top:11.5px;font-size:11.5px;color:#3f5f86;font-weight:bold;">?</span>
<span class="t" style="left:1858.6px;top:10.8px;font-size:16.5px;color:#333;">?</span>
<span class="t" style="left:1281px;top:12.0px;font-size:14.3px;color:#3c3c3c;letter-spacing:-0.43px;">Bowling</span>
<span class="t" style="left:1586px;top:11.9px;font-size:13.4px;color:#707070;letter-spacing:-0.92px;">搜索 SOLIDWORKS 帮助</span>
<div id="ribbon" class="abs"></div>
<span class="t" style="left:6.7px;top:72.0px;font-size:13.4px;color:#3b3b3b;letter-spacing:-0.12px;">CircuitWorks</span>
<span class="t" style="left:90px;top:72.0px;font-size:13.4px;color:#3b3b3b;letter-spacing:-0.01px;">PhotoView</span>
<span class="t" style="left:111.3px;top:90.2px;font-size:13.4px;color:#3b3b3b;letter-spacing:-0.82px;">360</span>
<span class="t" style="left:162px;top:72.0px;font-size:13.4px;color:#3b3b3b;letter-spacing:-0.54px;">ScanTo3D</span>
<span class="t" style="left:228.3px;top:72.0px;font-size:13.4px;color:#3b3b3b;letter-spacing:-0.90px;">SOLIDWORKS</span>
<span class="t" style="left:248.3px;top:90.2px;font-size:13.4px;color:#3b3b3b;letter-spacing:0.50px;">Motion</span>
<span class="t" style="left:319px;top:72.0px;font-size:13.4px;color:#3b3b3b;letter-spacing:-0.92px;">SOLIDWORKS</span>
<span class="t" style="left:337.5px;top:90.2px;font-size:13.4px;color:#3b3b3b;letter-spacing:0.01px;">Routing</span>
<span class="t" style="left:410.3px;top:72.0px;font-size:13.4px;color:#3b3b3b;letter-spacing:-0.95px;">SOLIDWORKS</span>
<span class="t" style="left:419.8px;top:90.2px;font-size:13.4px;color:#3b3b3b;letter-spacing:0.05px;">Simulation</span>
<span class="t" style="left:501.2px;top:72.0px;font-size:13.4px;color:#3b3b3b;letter-spacing:-0.94px;">SOLIDWORKS</span>
<span class="t" style="left:519.8px;top:90.2px;font-size:13.4px;color:#3b3b3b;letter-spacing:-0.04px;">Toolbox</span>
<span class="t" style="left:592.5px;top:72.0px;font-size:13.4px;color:#3b3b3b;letter-spacing:-0.26px;">TolAnalyst</span>
<span class="t" style="left:659.5px;top:72.0px;font-size:13.4px;color:#c4c4c4;letter-spacing:-0.98px;">SOLIDWORKS</span>
<span class="t" style="left:687px;top:90.2px;font-size:13.4px;color:#c4c4c4;letter-spacing:-0.76px;">Flow</span>
<span class="t" style="left:669px;top:108.4px;font-size:13.4px;color:#c4c4c4;letter-spacing:0.05px;">Simulation</span>
<span class="t" style="left:750px;top:72.0px;font-size:13.4px;color:#c4c4c4;letter-spacing:-0.98px;">SOLIDWORKS</span>
<span class="t" style="left:768px;top:90.2px;font-size:13.4px;color:#c4c4c4;letter-spacing:-0.02px;">Plastics</span>
<span class="t" style="left:842px;top:72.0px;font-size:13.4px;color:#c4c4c4;letter-spacing:-0.94px;">SOLIDWORKS</span>
<span class="t" style="left:853px;top:90.2px;font-size:13.4px;color:#c4c4c4;letter-spacing:-0.06px;">Inspection</span>
<span class="t" style="left:932.5px;top:72.0px;font-size:13.4px;color:#c4c4c4;letter-spacing:-0.92px;">SOLIDWORKS</span>
<span class="t" style="left:945.5px;top:90.2px;font-size:13.4px;color:#c4c4c4;letter-spacing:-0.51px;">MBD SNL</span>
<svg class="abs" style="left:0;top:0" width="2022" height="135" viewBox="0 0 2022 135"><defs><radialGradient id="pv" cx="35%" cy="30%" r="75%"><stop offset="0" stop-color="#9fd6ec"/><stop offset="0.35" stop-color="#3f93bb"/><stop offset="1" stop-color="#1f5f83"/></radialGradient><linearGradient id="sim" x1="0" y1="0" x2="1" y2="1"><stop offset="0" stop-color="#e8302a"/><stop offset="0.3" stop-color="#f5a21e"/><stop offset="0.5" stop-color="#d7dc2a"/><stop offset="0.7" stop-color="#3fb54a"/><stop offset="1" stop-color="#2468c8"/></linearGradient></defs><g><path d="M33 57.5l9.5-5 12.5 2.2v6.6l-9.5 4.8-12.5-2.8z" fill="#9fb2c0" stroke="#66788a" stroke-width="0.9"/><path d="M33 57.5l12.5 2.6 9.5-5.4" fill="none" stroke="#eef2f5" stroke-width="1"/><path d="M45.5 60.1v6" stroke="#66788a" stroke-width="0.9"/><path d="M36 60.5v3M38.5 61v3M41 61.6v3M43.5 62.2v3" stroke="#2e6f9f" stroke-width="1.3"/><path d="M38 55.5l4.5-2 6 1-4.5 2.2z" fill="#dfe6ec" stroke="#5a6b7b" stroke-width="0.7"/></g><circle cx="121" cy="59" r="10.2" fill="url(#pv)" stroke="#1c5878" stroke-width="0.8"/><path d="M124 49.4q6 2.4 7 8.6-3.4 0.4-5.6-2.4t-1.4-6.2z" fill="#0c2334"/><circle cx="116.5" cy="54.5" r="2" fill="#d8f1fb" opacity="0.8"/><g><rect x="180.5" y="49.5" width="12" height="7.5" rx="1.5" fill="#8fb0c6" stroke="#4f7894" stroke-width="1"/><rect x="183.3" y="51.5" width="6.4" height="3.4" fill="#dfeaf2" stroke="#5a7f99" stroke-width="0.6"/><path d="M189 57l3 3.5" stroke="#6f93ac" stroke-width="2.6"/><circle cx="196" cy="64" r="5.6" fill="#b9d3e3" stroke="#4f7f9f" stroke-width="1.4"/><circle cx="196.8" cy="64" r="3.2" fill="#e9f3f9" stroke="#7aa3bd" stroke-width="0.8"/></g><path d="M279.26 54.96 L279.26 56.64 L277.42 56.77 L277.09 58.02 L278.61 59.05 L277.77 60.50 L276.12 59.70 L275.20 60.62 L276.00 62.27 L274.55 63.11 L273.52 61.59 L272.27 61.92 L272.14 63.76 L270.46 63.76 L270.33 61.92 L269.08 61.59 L268.05 63.11 L266.60 62.27 L267.40 60.62 L266.48 59.70 L264.83 60.50 L263.99 59.05 L265.51 58.02 L265.18 56.77 L263.34 56.64 L263.34 54.96 L265.18 54.83 L265.51 53.58 L263.99 52.55 L264.83 51.10 L266.48 51.90 L267.40 50.98 L266.60 49.33 L268.05 48.49 L269.08 50.01 L270.33 49.68 L270.46 47.84 L272.14 47.84 L272.27 49.68 L273.52 50.01 L274.55 48.49 L276.00 49.33 L275.20 50.98 L276.12 51.90 L277.77 51.10 L278.61 52.55 L277.09 53.58 L277.42 54.83Z" fill="#3f8fc4" stroke="#2a6f9f" stroke-width="0.8"/><circle cx="271.3" cy="55.8" r="3.6" fill="#6fb4de"/><circle cx="271.3" cy="55.8" r="1.2" fill="#d7ecf8"/><path d="M269.53 63.76 L269.53 65.44 L268.28 65.58 L267.78 66.79 L268.57 67.77 L267.37 68.97 L266.39 68.18 L265.18 68.68 L265.04 69.93 L263.36 69.93 L263.22 68.68 L262.01 68.18 L261.03 68.97 L259.83 67.77 L260.62 66.79 L260.12 65.58 L258.87 65.44 L258.87 63.76 L260.12 63.62 L260.62 62.41 L259.83 61.43 L261.03 60.23 L262.01 61.02 L263.22 60.52 L263.36 59.27 L265.04 59.27 L265.18 60.52 L266.39 61.02 L267.37 60.23 L268.57 61.43 L267.78 62.41 L268.28 63.62Z" fill="#8e8e8e" stroke="#5e5e5e" stroke-width="0.8"/><circle cx="264.2" cy="64.6" r="2.2" fill="#e8e8e8" stroke="#5e5e5e" stroke-width="0.7"/><g fill="none"><path d="M349 50.5h6.5q3.5 0 3.5 3.5v11q0 3.5 3.5 3.5h9.5" stroke="#7e7e7e" stroke-width="4.8"/><path d="M349 50.5h6.5q3.5 0 3.5 3.5v11q0 3.5 3.5 3.5h9.5" stroke="#e9e9e9" stroke-width="2.4"/><path d="M361.5 50.5h10M361.5 55h10M361.5 60h10" stroke="#7e7e7e" stroke-width="2.6"/><path d="M363 50.5h8M363 55h8" stroke="#9cc3dd" stroke-width="1.1"/></g><path d="M442 55.5l8-6.3 5 2v6l6 2.3v6.3l-8 4-11-5z" fill="url(#sim)" stroke="#7a5a20" stroke-width="0.5"/><path d="M450 49.2v7.2l5 2.2M455 57.2l-5 4.3-8-3.2M450 61.5v7" fill="none" stroke="#ffffff" stroke-opacity="0.45" stroke-width="0.8"/><g><path d="M536.3 53.2q0-3.4 6.2-3.4t6.2 3.4v1.6h-12.4z" fill="#b9b9b9" stroke="#666" stroke-width="1"/><rect x="539.8" y="54.8" width="5.4" height="14.4" rx="1" fill="#a9a9a9" stroke="#666" stroke-width="1"/><path d="M540 58.5h5M540 61.2h5M540 63.9h5M540 66.6h5" stroke="#e6e6e6" stroke-width="1"/><path d="M539.5 51.5h6" stroke="#666" stroke-width="1.1"/></g><g><path d="M611 48.5h10.5M611 70h10.5" stroke="#555" stroke-width="1.3"/><path d="M611.5 49v20.5M621 55v9.5" stroke="#555" stroke-width="1.2"/><rect x="612" y="50" width="3.4" height="19" fill="#3f8cc4"/><path d="M615.4 50h5.6v4.5h-3v10.5h3v4.5h-5.6" fill="#dfe9f1" stroke="#777" stroke-width="0.9"/><path d="M624.5 49h9M624.5 69.7h9" stroke="#222" stroke-width="1.6"/><path d="M629 51v17" stroke="#222" stroke-width="1.4"/><path d="M629 49.6l-2.6 4.2h5.2zM629 69l-2.6-4.2h5.2z" fill="#222"/></g><g opacity="0.55"><path d="M873 52l8-3 8 3v10l-8 4-8-4z" fill="#ececec" stroke="#cfcfcf"/><path d="M873 52l8 3 8-3M881 55v11" fill="none" stroke="#d3d3d3"/><path d="M964 60l9-9 9 9v8h-18z" fill="#ededed" stroke="#cdcdcd"/><path d="M970 68v-5h6v5" fill="none" stroke="#cdcdcd"/></g><path d="M2000 123l6-6 6 6" fill="none" stroke="#222" stroke-width="2.2"/></svg>
<div id="viewtop" class="abs"></div>
<div id="tabrow" class="abs"></div>
<div class="tab" style="left:0px;width:59.5px"></div>
<span class="t" style="left:6.9px;top:139.1px;font-size:15.6px;color:#3a3a3a;letter-spacing:-0.90px;">装配体</span>
<div class="tab" style="left:59.5px;width:44px"></div>
<span class="t" style="left:66.9px;top:139.1px;font-size:15.6px;color:#3a3a3a;letter-spacing:-1.80px;">布局</span>
<div class="tab" style="left:103.5px;width:44.3px"></div>
<span class="t" style="left:111.6px;top:139.1px;font-size:15.6px;color:#3a3a3a;letter-spacing:-2.20px;">草图</span>
<div class="tab" style="left:147.8px;width:44.2px"></div>
<span class="t" style="left:155.6px;top:139.1px;font-size:15.6px;color:#3a3a3a;letter-spacing:-1.80px;">标注</span>
<div class="tab" style="left:192px;width:44px"></div>
<span class="t" style="left:200px;top:139.1px;font-size:15.6px;color:#3a3a3a;letter-spacing:-1.80px;">评估</span>
<div class="tab act" style="left:236px;width:141px"></div>
<span class="t" style="left:245px;top:138.8px;font-size:14.4px;color:#676767;letter-spacing:-0.70px;">SOLIDWORKS 插件</span>
<div id="left" class="abs"></div>
<svg class="abs" style="left:0;top:0" width="240" height="1080" viewBox="0 0 240 1080"><defs>
<symbol id="i-part" viewBox="0 0 20 22"><path d="M4.6 4.2l5.6-3.6 4.8 2v5.6l4.5 2.2v6.2l-5.7 4.8-12.6-7.4v-5.4l3.4-1.9z" fill="#f3cf3e" stroke="#a6800d" stroke-width="1.1" stroke-linejoin="round"/><path d="M4.6 4.2l4.9 2.2 5.5-3.8-4.8-2z" fill="#fde98a" stroke="#a6800d" stroke-width="0.8" stroke-linejoin="round"/><path d="M1.2 8.6l12.6 6.8 5.7-5-4.5-2.2-5.5 3.6-4.9-2.5v-2.6z" fill="#fbe063" stroke="#a6800d" stroke-width="0.8" stroke-linejoin="round"/><path d="M9.5 6.4v5.4M13.8 15.4v6" stroke="#a6800d" stroke-width="0.9" fill="none"/></symbol>
<symbol id="i-asm" viewBox="0 0 22 24"><path d="M1.5 10.3l4.4-3.8v-3.7l4.4-2.3 2.5 1v10l4.3 2.5 4.6-2.5v5l-7.1 6.3-13.1-7.5z" fill="#f3cf3e" stroke="#a6800d" stroke-width="1.1" stroke-linejoin="round"/><path d="M1.5 10.3l13.1 7 7.1-5.8M14.6 17.3v5.4M5.9 6.5l4 2" fill="none" stroke="#a6800d" stroke-width="0.8"/><path d="M1.5 10.3l4.4-3.8 4 2v3l4.7 5.8z" fill="#fbe063" opacity="0.8"/><path d="M10.9 4l5-2.8 5.9 2.2v8.1l-4.7 2.8-6.2-2.8z" fill="#86c8ee" stroke="#2d6f9c" stroke-width="1" stroke-linejoin="round"/><path d="M10.9 4l5-2.8 5.9 2.2-4.7 2.9z" fill="#d6eefb" stroke="#2d6f9c" stroke-width="0.8" stroke-linejoin="round"/><path d="M17.1 6.3v8" stroke="#2d6f9c" stroke-width="0.9"/><path d="M17.1 6.3l4.7-2.9v8.1l-4.7 2.8z" fill="#5fb0e0" opacity="0.7"/></symbol>
<symbol id="i-fold" viewBox="0 0 23 21"><path d="M1 19.8v-17.3q0-1.5 1.5-1.5h5.2q1 0 1.6 1l0.8 1.4h10.4q1.5 0 1.5 1.5v14.9z" fill="#e9e9e9" stroke="#8a8a8a" stroke-width="1"/><path d="M1 19.8v-12.8q0-1.2 1.2-1.2h18.6q1.2 0 1.2 1.2v12.8z" fill="#fafafa" stroke="#6b6b6b" stroke-width="1.2" stroke-linejoin="round"/></symbol>
<symbol id="i-plane" viewBox="0 0 18 24"><path d="M2.2 6.8l12.8-3.6v13.2l-12.8 4z" fill="#fafafa" stroke="#8a8a8a" stroke-width="1.1" stroke-linejoin="round"/><path d="M8.6 0.8v22.4" stroke="#8a8a8a" stroke-width="1" stroke-dasharray="2.2 1.6"/></symbol>
<symbol id="i-mate" viewBox="0 0 24 20"><g fill="none" stroke="#2f7fb5" stroke-width="1.7" stroke-linecap="round"><path d="M3 13.5v-8.5q0-3.4 3.2-3.4t3.2 3.4v10.4q0 2.2-2 2.2t-2-2.2v-9"/><path d="M14 17v-9.4q0-3.2 3.4-3.2t3.4 3.2v8.8q0 2.6-2.2 2.6t-2.2-2.6v-7.6"/></g><g fill="none" stroke="#9fd0ec" stroke-width="0.6"><path d="M3 13.5v-8.5q0-3.4 3.2-3.4t3.2 3.4v10.4"/><path d="M14 17v-9.4q0-3.2 3.4-3.2t3.4 3.2v8.8"/></g></symbol>
</defs><circle cx="112.5" cy="175" r="3.4" fill="#d9d9d9" stroke="#c6c6c6" stroke-width="1"/><rect x="42" y="188.5" width="165" height="30" fill="#cecece" stroke="#b4b4b4"/><path d="M1.5 218.5v-30h40.5" fill="none" stroke="#c4c4c4"/><path d="M83 189v29M124.4 189v29M165.6 189v29" stroke="#b9b9b9" stroke-width="1"/><use href="#i-asm" x="11" y="191.5" width="22" height="24"/><rect x="52.5" y="193.5" width="22" height="19.5" fill="#f4f7fa" stroke="#56809f" stroke-width="1.2"/><rect x="52.5" y="193.5" width="22" height="3.6" fill="#5b8db3"/><g fill="#4a88bb" stroke="#2d6591" stroke-width="0.6"><rect x="55" y="199.3" width="4.4" height="3"/><rect x="55" y="203.8" width="4.4" height="3"/><rect x="55" y="208.3" width="4.4" height="3"/></g><path d="M62 200.8h10M62 205.3h10M62 209.8h10" stroke="#777" stroke-width="1.1"/><g fill="#f1f1f1" stroke="#5c5c5c" stroke-width="1.2"><path d="M96.5 192.5v22" fill="none" stroke-width="1.6"/><path d="M98.5 192.5v22" fill="none" stroke="#b5b5b5" stroke-width="1"/><rect x="102.5" y="193" width="8" height="8" rx="1"/><rect x="105.5" y="207" width="8" height="8" rx="1"/><path d="M97 204h8.5v3" fill="none"/></g><g fill="none" stroke="#222" stroke-width="1.7"><circle cx="145" cy="203.5" r="7.8"/><path d="M134.5 203.5h21M145 193v21"/></g><defs><clipPath id="dmc"><circle cx="186.3" cy="202.8" r="10.4"/></clipPath><radialGradient id="dmg" cx="35%" cy="28%" r="60%"><stop offset="0" stop-color="#fff" stop-opacity="0.75"/><stop offset="0.5" stop-color="#fff" stop-opacity="0"/><stop offset="1" stop-color="#000" stop-opacity="0.25"/></radialGradient></defs><g clip-path="url(#dmc)"><rect x="175" y="191" width="23" height="24" fill="#2d6fc9"/><path d="M186.3 202.8l-12 4v12h12z" fill="#2fa23b"/><path d="M186.3 202.8v14h14v-10z" fill="#e7b325"/><path d="M186.3 202.8l6.5 12 8-3.4v-6z" fill="#e4572d"/><path d="M186.3 202.8l12 2.6v-16h-8.6z" fill="#23100c"/></g><circle cx="186.3" cy="202.8" r="10.4" fill="url(#dmg)"/><path d="M217 196l6.6 6.4-6.6 6.4" fill="none" stroke="#3a3a3a" stroke-width="2.3"/><rect x="4" y="219.5" width="220" height="27.5" fill="#f7f7f7" stroke="#dedede"/><path d="M8.6 226.4h20.6l-8 9.6v7l-4.2 1.6v-8.6z" fill="#eef4f8" stroke="#6f8ea6" stroke-width="1.1" stroke-linejoin="round"/><ellipse cx="18.9" cy="225.8" rx="10.3" ry="2.3" fill="#4f93c4" stroke="#3a7aa8" stroke-width="0.9"/><path d="M31.6 235h5.2l-2.6 3z" fill="#333"/><use href="#i-asm" x="4.5" y="248.5" width="21" height="23.5"/><use href="#i-fold" x="31.5" y="275.87" width="22" height="20.5"/><g><circle cx="44" cy="289.37" r="5" fill="#fff" stroke="#2d6e9e" stroke-width="1.5"/><path d="M44 285.87v3.4h3" fill="none" stroke="#222" stroke-width="1.1"/><path d="M35.4 289.37l4-2.8v5.6z" fill="#2d6e9e"/></g><use href="#i-fold" x="31.5" y="301.14" width="22" height="20.5"/><g><circle cx="43" cy="314.74" r="5.6" fill="#f2f2f2" stroke="#777" stroke-width="1.3"/><path d="M43 315.34l4.4-4.6" stroke="#c8372d" stroke-width="1.7"/><path d="M47 311.54q2 3.2 0.6 6.2l-2.2-1.4z" fill="#c8372d"/><path d="M39.2 311.74l1.6 1.4M43 309.94v1.8" stroke="#555" stroke-width="0.9"/></g><use href="#i-fold" x="31.5" y="326.41" width="22" height="20.5"/><path d="M33 346.41l8.6-13.6h2.8l8.6 13.6z" fill="#cfe6f4"/><use href="#i-plane" x="34" y="350.18" width="17" height="23"/><use href="#i-plane" x="34" y="375.45" width="17" height="23"/><use href="#i-plane" x="34" y="400.72" width="17" height="23"/><g stroke="#111" fill="#111"><path d="M35.6 446.69v-14M35 446.69h13" stroke-width="1.7" fill="none"/><path d="M35.6 427.99l-3 5.4h6zM53 446.69l-5.6-3v6z" stroke="none"/><rect x="33.4" y="444.69" width="4.2" height="4.2" stroke="none"/></g><use href="#i-part" x="32.6" y="452.76" width="20" height="22"/><use href="#i-part" x="32.6" y="478.03" width="20" height="22"/><use href="#i-part" x="32.6" y="503.3" width="20" height="22"/><use href="#i-part" x="32.6" y="528.57" width="20" height="22"/><use href="#i-part" x="32.6" y="553.84" width="20" height="22"/><use href="#i-part" x="32.6" y="579.11" width="20" height="22"/><use href="#i-part" x="32.6" y="604.38" width="20" height="22"/><use href="#i-part" x="32.6" y="629.65" width="20" height="22"/><use href="#i-part" x="32.6" y="654.92" width="20" height="22"/><use href="#i-part" x="32.6" y="680.19" width="20" height="22"/><use href="#i-part" x="32.6" y="705.46" width="20" height="22"/><use href="#i-part" x="32.6" y="730.73" width="20" height="22"/><use href="#i-part" x="32.6" y="756" width="20" height="22"/><use href="#i-part" x="32.6" y="781.27" width="20" height="22"/><use href="#i-part" x="32.6" y="806.54" width="20" height="22"/><use href="#i-mate" x="31.5" y="833.31" width="23" height="19"/><path d="M11.3 333.21v8.4l4.8-4.2z" fill="#6b6b6b"/><path d="M11.3 459.56v8.4l4.8-4.2z" fill="#6b6b6b"/><path d="M11.3 484.83v8.4l4.8-4.2z" fill="#6b6b6b"/><path d="M11.3 510.1v8.4l4.8-4.2z" fill="#6b6b6b"/><path d="M11.3 535.37v8.4l4.8-4.2z" fill="#6b6b6b"/><path d="M11.3 560.64v8.4l4.8-4.2z" fill="#6b6b6b"/><path d="M11.3 585.91v8.4l4.8-4.2z" fill="#6b6b6b"/><path d="M11.3 611.18v8.4l4.8-4.2z" fill="#6b6b6b"/><path d="M11.3 636.45v8.4l4.8-4.2z" fill="#6b6b6b"/><path d="M11.3 661.72v8.4l4.8-4.2z" fill="#6b6b6b"/><path d="M11.3 686.99v8.4l4.8-4.2z" fill="#6b6b6b"/><path d="M11.3 712.26v8.4l4.8-4.2z" fill="#6b6b6b"/><path d="M11.3 737.53v8.4l4.8-4.2z" fill="#6b6b6b"/><path d="M11.3 762.8v8.4l4.8-4.2z" fill="#6b6b6b"/><path d="M11.3 788.07v8.4l4.8-4.2z" fill="#6b6b6b"/><path d="M11.3 813.34v8.4l4.8-4.2z" fill="#6b6b6b"/><rect x="1.5" y="854.5" width="225" height="3" fill="#2b6db3"/><path d="M229.5 563.5h8.5v49h-8.5" fill="#fafafa" stroke="#c9c9c9"/><circle cx="233.3" cy="587" r="2.6" fill="#d4d4d4" stroke="#bdbdbd" stroke-width="0.8"/><rect x="1" y="1013" width="228" height="25" fill="#f0f0f0"/><rect x="21.5" y="1020.5" width="94" height="8.5" fill="#8b8b8b"/></svg>
<span class="t" style="left:31.5px;top:251.8px;font-size:14.6px;color:#2d2d2d;letter-spacing:0.34px;">Bowling  (Default&lt;Default_D</span>
<span class="t" style="left:58.7px;top:277.1px;font-size:14.6px;color:#2d2d2d;letter-spacing:0.40px;">History</span>
<span class="t" style="left:58.7px;top:302.4px;font-size:14.6px;color:#2d2d2d;letter-spacing:-0.46px;">Sensors</span>
<span class="t" style="left:58.7px;top:327.7px;font-size:14.6px;color:#2d2d2d;letter-spacing:-0.90px;">注解</span>
<span class="t" style="left:58.7px;top:352.9px;font-size:14.6px;color:#2d2d2d;letter-spacing:-0.90px;">前视</span>
<span class="t" style="left:58.7px;top:378.2px;font-size:14.6px;color:#2d2d2d;letter-spacing:-0.90px;">上视</span>
<span class="t" style="left:58.7px;top:403.5px;font-size:14.6px;color:#2d2d2d;letter-spacing:-0.90px;">右视</span>
<span class="t" style="left:58.7px;top:428.7px;font-size:14.6px;color:#2d2d2d;letter-spacing:-0.90px;">原点</span>
<span class="t" style="left:58.7px;top:454.0px;font-size:14.6px;color:#2d2d2d;letter-spacing:0.48px;width:168.3px;overflow:hidden;">(f) 1-1&lt;1&gt; (默认&lt;&lt;Defau</span>
<span class="t" style="left:58.7px;top:479.3px;font-size:14.6px;color:#2d2d2d;letter-spacing:0.54px;width:168.3px;overflow:hidden;">(-) 2&lt;1&gt; (默认&lt;&lt;Default:</span>
<span class="t" style="left:58.7px;top:504.5px;font-size:14.6px;color:#2d2d2d;letter-spacing:0.58px;width:168.3px;overflow:hidden;">(f) 3&lt;1&gt; (默认&lt;&lt;Default:</span>
<span class="t" style="left:58.7px;top:529.8px;font-size:14.6px;color:#2d2d2d;letter-spacing:0.58px;width:168.3px;overflow:hidden;">(f) 4&lt;1&gt; (默认&lt;&lt;Default:</span>
<span class="t" style="left:58.7px;top:555.1px;font-size:14.6px;color:#2d2d2d;letter-spacing:0.54px;width:168.3px;overflow:hidden;">(-) 5&lt;1&gt; (默认&lt;&lt;Default:</span>
<span class="t" style="left:58.7px;top:580.4px;font-size:14.6px;color:#2d2d2d;letter-spacing:0.54px;width:168.3px;overflow:hidden;">(-) 5&lt;2&gt; (默认&lt;&lt;Default:</span>
<span class="t" style="left:58.7px;top:605.6px;font-size:14.6px;color:#2d2d2d;letter-spacing:0.54px;width:168.3px;overflow:hidden;">(-) 5&lt;3&gt; (默认&lt;&lt;Default:</span>
<span class="t" style="left:58.7px;top:630.9px;font-size:14.6px;color:#2d2d2d;letter-spacing:0.54px;width:168.3px;overflow:hidden;">(-) 5&lt;4&gt; (默认&lt;&lt;Default:</span>
<span class="t" style="left:58.7px;top:656.2px;font-size:14.6px;color:#2d2d2d;letter-spacing:0.54px;width:168.3px;overflow:hidden;">(-) 5&lt;5&gt; (默认&lt;&lt;Default:</span>
<span class="t" style="left:58.7px;top:681.4px;font-size:14.6px;color:#2d2d2d;letter-spacing:0.54px;width:168.3px;overflow:hidden;">(-) 5&lt;6&gt; (默认&lt;&lt;Default:</span>
<span class="t" style="left:58.7px;top:706.7px;font-size:14.6px;color:#2d2d2d;letter-spacing:0.54px;width:168.3px;overflow:hidden;">(-) 5&lt;7&gt; (默认&lt;&lt;Default:</span>
<span class="t" style="left:58.7px;top:732.0px;font-size:14.6px;color:#2d2d2d;letter-spacing:0.54px;width:168.3px;overflow:hidden;">(-) 5&lt;8&gt; (默认&lt;&lt;Default:</span>
<span class="t" style="left:58.7px;top:757.2px;font-size:14.6px;color:#2d2d2d;letter-spacing:0.54px;width:168.3px;overflow:hidden;">(-) 5&lt;9&gt; (默认&lt;&lt;Default:</span>
<span class="t" style="left:58.7px;top:782.5px;font-size:14.6px;color:#2d2d2d;letter-spacing:0.52px;width:168.3px;overflow:hidden;">(-) 5&lt;10&gt; (默认&lt;&lt;Defaul</span>
<span class="t" style="left:58.7px;top:807.8px;font-size:14.6px;color:#2d2d2d;letter-spacing:0.58px;width:168.3px;overflow:hidden;">(f) 6&lt;1&gt; (默认&lt;&lt;Default:</span>
<span class="t" style="left:58.7px;top:833.1px;font-size:14.6px;color:#2d2d2d;letter-spacing:-0.90px;">配合</span>
<span class="t" style="left:36.4px;top:330.1px;font-size:17.5px;color:#1f5f8f;font-weight:bold;">A</span>
<svg class="abs" style="left:0;top:0" width="2022" height="200" viewBox="0 0 2022 200"><defs><linearGradient id="bl" x1="0" y1="0" x2="1" y2="1"><stop offset="0" stop-color="#a9d4ee"/><stop offset="1" stop-color="#3f86b8"/></linearGradient><linearGradient id="gy" x1="0" y1="0" x2="1" y2="1"><stop offset="0" stop-color="#f4f4f4"/><stop offset="1" stop-color="#a9a9a9"/></linearGradient></defs><path d="M933 157l9-4 12 3.4-9 5.4z" fill="url(#bl)" stroke="#3c7fae" stroke-width="0.8"/><path d="M943.6 157v-12" stroke="#222" stroke-width="1.7"/><path d="M943.6 141.5l-3 5h6z" fill="#222"/><path d="M964 162l7-7.4" stroke="#5c89ab" stroke-width="3.4" stroke-linecap="round"/><circle cx="976.5" cy="149.5" r="6.6" fill="#f6f9fb" stroke="#7d8b98" stroke-width="1.4"/><path d="M973 147.4l1.6-1.6M980 147.4l-1.6-1.6M973 151.6l1.6 1.6M980 151.6l-1.6 1.6" stroke="#555" stroke-width="1.1"/><path d="M994.5 162l7-7.4" stroke="#5c89ab" stroke-width="3.4" stroke-linecap="round"/><circle cx="1006.5" cy="150" r="6.8" fill="#f6f9fb" stroke="#7d8b98" stroke-width="1.4"/><path d="M1001 141.5h13.5v13" fill="none" stroke="#333" stroke-width="1" stroke-dasharray="2 1.4"/><g transform="translate(1034 153) rotate(-32)"><rect x="-10.5" y="-4.4" width="19" height="8.8" rx="3.6" fill="url(#gy)" stroke="#8d8d8d" stroke-width="0.9"/><ellipse cx="8.2" cy="0" rx="2.6" ry="4.4" fill="#e9e9e9" stroke="#8d8d8d" stroke-width="0.9"/></g><path d="M1036.5 156.5l4.6-3.4v2h4.6v3.6h-4.6v2z" fill="#3f86b8"/><path d="M1054.5 147.5q4-4.6 10-4.6t10 4.6v12.6q-4 3-6.4 3v-10.6q-3.6-1.6-7.2 0v10.6q-3.6 0-6.4-3z" fill="url(#bl)" stroke="#4d7896" stroke-width="0.9"/><path d="M1061 152.5q3.6-1.6 7.2 0v10q-3.6-1.6-7.2 0z" fill="#eef1f3" stroke="#8a8a8a" stroke-width="0.7"/><path d="M1083.5 149.5l6-6h15.5v13l-6 6h-15.5z" fill="#fafafa" stroke="#6e6e6e" stroke-width="0.9"/><rect x="1083.5" y="149.5" width="15.5" height="13" fill="url(#bl)" stroke="#3f7aa6" stroke-width="0.9"/><path d="M1099 149.5l6-6M1094 142.4v5M1092 145.4l2 2.4 2-2.4" fill="none" stroke="#444" stroke-width="0.9"/><path d="M1110.6 151h6l-3 3.4z" fill="#777"/><path d="M1126.5 146.5l6.4-3.4 12 1.6v13.4l-6 4.4-12.4-2.4z" fill="#f3f6f8" stroke="#7f96a8" stroke-width="0.9"/><path d="M1126.5 146.5l12.4 2v14" fill="none" stroke="#7f96a8" stroke-width="0.9"/><path d="M1126.5 146.5l12.4 2v14l-12.4-2.4z" fill="url(#bl)"/><path d="M1152 151h6l-3 3.4z" fill="#777"/><path d="M1166.5 152q11-10.6 22 0-11 10.6-22 0z" fill="#ececec" stroke="#8c8c8c" stroke-width="1.1"/><circle cx="1176.8" cy="152" r="4.8" fill="#2b2b2b"/><path d="M1177.6 143v18.5" stroke="#666" stroke-width="1.2"/><path d="M1194 151h6l-3 3.4z" fill="#777"/><defs><clipPath id="c9"><circle cx="1218" cy="151.6" r="10.6"/></clipPath><clipPath id="c10"><circle cx="1249" cy="150.6" r="9.6"/></clipPath><radialGradient id="dmg2" cx="35%" cy="28%" r="60%"><stop offset="0" stop-color="#fff" stop-opacity="0.7"/><stop offset="0.5" stop-color="#fff" stop-opacity="0"/><stop offset="1" stop-color="#000" stop-opacity="0.2"/></radialGradient></defs><g clip-path="url(#c9)"><rect x="1207" y="140" width="23" height="23" fill="#de4a36"/><path d="M1218 151.6v-12h-12v10z" fill="#3f87d8"/><path d="M1218 151.6l-12-2v14h8z" fill="#44ad4b"/><path d="M1218 151.6l-4 12h12l2-6z" fill="#efc132"/></g><circle cx="1218" cy="151.6" r="10.6" fill="url(#dmg2)"/><path d="M1222 160.5l6.4-6 1.6 1.8-6.4 6z" fill="#8a6a3a" stroke="#6a4a1a" stroke-width="0.5"/><path d="M1239 157h21v6.6h-21z" fill="#222"/><path d="M1242 157h3v3.3h-3zM1248 157h3v3.3h-3zM1254 157h3v3.3h-3zM1239 160.3h3v3.3h-3zM1245 160.3h3v3.3h-3zM1251 160.3h3v3.3h-3zM1257 160.3h3v3.3h-3z" fill="#eee"/><g clip-path="url(#c10)"><rect x="1239" y="140" width="21" height="21" fill="#de4a36"/><path d="M1249 150.6v-11h-11v9z" fill="#3f87d8"/><path d="M1249 150.6l-11-2v13h7z" fill="#44ad4b"/><path d="M1249 150.6l-4 11h11l2-5z" fill="#efc132"/></g><circle cx="1249" cy="150.6" r="9.6" fill="url(#dmg2)"/><path d="M1266 151h6l-3 3.4z" fill="#777"/><rect x="1281" y="143.5" width="21" height="14" rx="1" fill="#e2e2e2" stroke="#6d6d6d" stroke-width="1.6"/><path d="M1291.5 158v3.4M1286.5 162h10" stroke="#6d6d6d" stroke-width="1.8"/><path d="M1308 151h6l-3 3.4z" fill="#777"/></svg>
<div id="right" class="abs"></div><div id="rhead" class="abs"></div>
<span class="t" style="left:1751px;top:140.2px;font-size:15.2px;color:#111;font-weight:bold;letter-spacing:-0.56px;">SOLIDWORKS 资源</span>
<span class="t" style="left:1639px;top:138.9px;font-size:19px;color:#222;">«</span>
<span class="t" style="left:1659.6px;top:198.0px;font-size:12.4px;color:#7a7a7a;letter-spacing:-0.42px;">欢迎使用  SOLIDWORKS</span>
<div class="rsec" style="top:246px"></div>
<span class="t" style="left:1643.8px;top:246.7px;font-size:12.2px;color:#333;font-weight:bold;letter-spacing:-0.14px;">SOLIDWORKS 工具</span>
<div class="rsec" style="top:462px"></div>
<span class="t" style="left:1643.8px;top:463.1px;font-size:12.2px;color:#333;font-weight:bold;letter-spacing:1.32px;">在线资源</span>
<div class="rsec" style="top:565px"></div>
<span class="t" style="left:1643.8px;top:566.1px;font-size:12.2px;color:#333;font-weight:bold;letter-spacing:1.32px;">订阅服务</span>
<span class="t" style="left:1661.3px;top:269.1px;font-size:12.3px;color:#7a7a7a;letter-spacing:0.26px;">属性标签编制程序</span>
<span class="t" style="left:1661.3px;top:298.7px;font-size:12.3px;color:#7a7a7a;letter-spacing:-0.61px;">SOLIDWORKS Rx</span>
<span class="t" style="left:1661.3px;top:326.1px;font-size:12.3px;color:#7a7a7a;letter-spacing:0.28px;">性能基准测试</span>
<span class="t" style="left:1661.3px;top:354.5px;font-size:12.3px;color:#7a7a7a;letter-spacing:0.28px;">比较我的评分</span>
<span class="t" style="left:1661.3px;top:382.7px;font-size:12.3px;color:#7a7a7a;letter-spacing:0.28px;">复制设置向导</span>
<span class="t" style="left:1661.3px;top:411.0px;font-size:12.3px;color:#7a7a7a;letter-spacing:0.17px;">我的产品</span>
<span class="t" style="left:1661.3px;top:486.9px;font-size:12.3px;color:#7a7a7a;letter-spacing:-0.51px;">3DEXPERIENCE Marketplace</span>
<span class="t" style="left:1661.3px;top:515.3px;font-size:12.3px;color:#7a7a7a;letter-spacing:0.01px;">Partner Solutions</span>
<span class="t" style="left:1661.3px;top:588.1px;font-size:12.3px;color:#7a7a7a;letter-spacing:0.17px;">订阅服务</span>
<svg class="abs" style="left:0;top:0" width="2022" height="1080" viewBox="0 0 2022 1080"><path d="M1990.15 147.91 L1990.15 151.49 L1987.10 151.43 L1986.21 153.57 L1988.41 155.68 L1985.88 158.21 L1983.77 156.01 L1981.63 156.90 L1981.69 159.95 L1978.11 159.95 L1978.17 156.90 L1976.03 156.01 L1973.92 158.21 L1971.39 155.68 L1973.59 153.57 L1972.70 151.43 L1969.65 151.49 L1969.65 147.91 L1972.70 147.97 L1973.59 145.83 L1971.39 143.72 L1973.92 141.19 L1976.03 143.39 L1978.17 142.50 L1978.11 139.45 L1981.69 139.45 L1981.63 142.50 L1983.77 143.39 L1985.88 141.19 L1988.41 143.72 L1986.21 145.83 L1987.10 147.97Z" fill="#fafafa" stroke="#6a6a6a" stroke-width="1.2" stroke-linejoin="round"/><circle cx="1979.9" cy="149.7" r="3.6" fill="#b0b0b0" stroke="#6a6a6a" stroke-width="1.2"/><path d="M1995.6 149.7h8" stroke="#1a1a1a" stroke-width="1.3"/><path d="M2003 143.3V156.8Q2007.5 152.6 2009.7 152.2L2015 154.6V144.9L2009.7 147.4Q2007.5 147 2003 143.3Z" fill="#1c1c1c" stroke="#d9d9d9" stroke-width="0.7"/><path d="M1978.5 257.1l3.5-3.6 3.5 3.6" fill="none" stroke="#555" stroke-width="1.4"/><path d="M1978.5 473.1l3.5-3.6 3.5 3.6" fill="none" stroke="#555" stroke-width="1.4"/><path d="M1978.5 576.1l3.5-3.6 3.5 3.6" fill="none" stroke="#555" stroke-width="1.4"/><path d="M1644.5 207v7h9v-7" fill="#eef3f7" stroke="#555" stroke-width="1.1"/><path d="M1642 208l7-6.6 7 6.6" fill="none" stroke="#2f6f9c" stroke-width="1.8"/><rect x="1647.4" y="209.4" width="3.2" height="4.6" fill="#5f8fb3"/><g transform="translate(1642.5 271.5)"><path d="M0.6 3.4l5.6-2.8 5.6 2v6.6l-5.2 3.4-6-2.6z" fill="#c9352b" stroke="#8e1f18" stroke-width="0.8" stroke-linejoin="round"/><path d="M0.6 3.4l6 2.2 5.2-3M6.6 5.6v7" fill="none" stroke="#f3b0a8" stroke-width="0.8"/><path d="M2.2 5.6l2.6 1v3.6l-2.6-1.1z" fill="#f6d9d5"/><rect x="8" y="8.4" width="6.6" height="6" fill="#e9e9e9" stroke="#666" stroke-width="0.8"/></g><g transform="translate(1642 300.5)"><path d="M0.6 3.4l5.6-2.8 5.6 2v6.6l-5.2 3.4-6-2.6z" fill="#c9352b" stroke="#8e1f18" stroke-width="0.8" stroke-linejoin="round"/><path d="M0.6 3.4l6 2.2 5.2-3M6.6 5.6v7" fill="none" stroke="#f3b0a8" stroke-width="0.8"/><path d="M2.2 5.6l2.6 1v3.6l-2.6-1.1z" fill="#f6d9d5"/><rect x="8" y="8.4" width="6.6" height="6" fill="#9fc9a5" stroke="#666" stroke-width="0.8"/></g><g transform="translate(1642 328.5)"><path d="M0.6 3.4l5.6-2.8 5.6 2v6.6l-5.2 3.4-6-2.6z" fill="#c9352b" stroke="#8e1f18" stroke-width="0.8" stroke-linejoin="round"/><path d="M0.6 3.4l6 2.2 5.2-3M6.6 5.6v7" fill="none" stroke="#f3b0a8" stroke-width="0.8"/><path d="M2.2 5.6l2.6 1v3.6l-2.6-1.1z" fill="#f6d9d5"/><rect x="8" y="8.4" width="6.6" height="6" fill="#d9d9d9" stroke="#666" stroke-width="0.8"/></g><rect x="1643" y="357" width="13.5" height="13" rx="2" fill="#3b8cc2" stroke="#2b6c99" stroke-width="0.9"/><path d="M1645.5 364q2.2-3.2 4.4-1.4t4.4-1.2M1645.5 367q2.2-3.2 4.4-1.4t4.4-1.2" fill="none" stroke="#e4f1fa" stroke-width="1.2"/><g><circle cx="1646" cy="394" r="2.6" fill="#4c7fae"/><path d="M1643 399l3-3.4 3 3.4z" fill="#4c7fae"/><path d="M1649 387.5l3.4-2.2 2 3.2" fill="none" stroke="#555" stroke-width="1"/><path d="M1648.5 392.5l4.4-2.2 4.4 1.6v5.4l-4.2 2.6-4.6-2z" fill="#c9352b" stroke="#8e1f18" stroke-width="0.8"/></g><g><path d="M1642.6 416.6l4.6-2.4 4.6 1.8v4.8l-4.2 2.6-5-2.2z" fill="#c9352b" stroke="#8e1f18" stroke-width="0.8"/><path d="M1648 427.5q0-4.4 4.4-4.4t4.4 4.4z" fill="#cfcfcf" stroke="#777" stroke-width="0.8"/><circle cx="1652.4" cy="420.8" r="2.2" fill="#cfcfcf" stroke="#777" stroke-width="0.8"/></g><defs><radialGradient id="mk" cx="40%" cy="30%" r="70%"><stop offset="0" stop-color="#7fb8e8"/><stop offset="0.5" stop-color="#2467a8"/><stop offset="1" stop-color="#123c68"/></radialGradient></defs><circle cx="1650" cy="496.3" r="7.6" fill="url(#mk)"/><path d="M1643 521.5l5 3.6 8.6-4.6-1 4.6-7.6 5.4-5-4.4z" fill="#f2f2f2" stroke="#6d6d6d" stroke-width="1.1" stroke-linejoin="round"/><path d="M1648 525.1l2.4 2 5.2-3.4" fill="none" stroke="#6d6d6d" stroke-width="0.9"/><g><circle cx="1649" cy="597" r="6.6" fill="#4c8fc8" stroke="#2c5f90" stroke-width="0.9"/><path d="M1645 594q2-2.6 4.6-1.2t1 3.6-3 1.6-2.6 2.6" fill="#d9ecd2" stroke="none"/><path d="M1649.5 598.5l4.2-1.8 3.8 1.4v4.6l-3.8 2.4-4.2-1.8z" fill="#c9352b" stroke="#8e1f18" stroke-width="0.8"/></g><rect x="1595.5" y="243.5" width="32" height="142.5" fill="#cfcfcf" stroke="#b2b2b2"/><path d="M1627.5 216.5h-32v27" fill="none" stroke="#b9b9b9"/><rect x="1596" y="217" width="32" height="26.5" fill="#fafafa"/><path d="M1596 272h31" stroke="#b2b2b2"/><path d="M1596 300.3h31" stroke="#b2b2b2"/><path d="M1596 328.6h31" stroke="#b2b2b2"/><path d="M1596 357h31" stroke="#b2b2b2"/><path d="M1603.5 229v11h15v-11" fill="#f3f6f9" stroke="#5e5e5e" stroke-width="1.3"/><path d="M1600.5 230l10.5-10 10.5 10" fill="none" stroke="#2f6187" stroke-width="2.4"/><path d="M1608.3 240v-7.6h5.4v7.6" fill="#fff" stroke="#555" stroke-width="1.1"/><path d="M1611.6 236h1.4" stroke="#2f6187" stroke-width="1.4"/><path d="M1603 252.5l4.6-3.4 3.6 1.6v15l-4.6 3.4-3.6-1.6z" fill="#f1f1f1" stroke="#5a5a5a" stroke-width="1" stroke-linejoin="round"/><path d="M1603 252.5l3.6 1.6 4.6-3.4M1606.6 254.1v15" fill="none" stroke="#5a5a5a" stroke-width="0.9"/><path d="M1608.4 252.5l4.6-3.4 3.6 1.6v15l-4.6 3.4-3.6-1.6z" fill="#f1f1f1" stroke="#5a5a5a" stroke-width="1" stroke-linejoin="round"/><path d="M1608.4 252.5l3.6 1.6 4.6-3.4M1612 254.1v15" fill="none" stroke="#5a5a5a" stroke-width="0.9"/><path d="M1613.8 252.5l4.6-3.4 3.6 1.6v15l-4.6 3.4-3.6-1.6z" fill="#f1f1f1" stroke="#5a5a5a" stroke-width="1" stroke-linejoin="round"/><path d="M1613.8 252.5l3.6 1.6 4.6-3.4M1617.4 254.1v15" fill="none" stroke="#5a5a5a" stroke-width="0.9"/><path d="M1599.5 296.5v-18h7.5l2 2.5h8v4" fill="#dcdcdc" stroke="#555" stroke-width="1.2" stroke-linejoin="round"/><path d="M1604.5 283.5h19.5l-5.5 13h-19z" fill="#f6f6f6" stroke="#4f4f4f" stroke-width="1.3" stroke-linejoin="round"/><rect x="1601" y="305.5" width="21.5" height="19" fill="#f4f4f4" stroke="#8a8a8a" stroke-width="1"/><g fill="#f2cb2f" stroke="#9a7a0a" stroke-width="0.8"><rect x="1603.5" y="307.5" width="6.6" height="5"/><rect x="1613" y="307.5" width="6.6" height="5"/><path d="M1603 322.5v-4h3v-3h4v3h2.4v4z"/></g><rect x="1614" y="317.5" width="7.6" height="5.6" fill="#fff" stroke="#5a7f9f" stroke-width="0.9"/><rect x="1614" y="317.5" width="7.6" height="1.8" fill="#5a7f9f"/><defs><clipPath id="apc"><circle cx="1611" cy="342.8" r="10.3"/></clipPath></defs><g clip-path="url(#apc)"><rect x="1600" y="332" width="22" height="22" fill="#d9402f"/><path d="M1611 342.8v-12h-12v9z" fill="#3a7fd0"/><path d="M1611 342.8l-12-3v14h7z" fill="#3da645"/><path d="M1611 342.8l-5 11h12l4-6z" fill="#e9b92a"/></g><circle cx="1611" cy="342.8" r="10.3" fill="url(#dmg)"/><rect x="1600.5" y="361.5" width="21" height="20" fill="#f4f7fa" stroke="#56809f" stroke-width="1.2"/><rect x="1600.5" y="361.5" width="21" height="3.4" fill="#5b8db3"/><g fill="#4a88bb" stroke="#2d6591" stroke-width="0.6"><rect x="1603" y="367.4" width="4.2" height="3"/><rect x="1603" y="372" width="4.2" height="3"/><rect x="1603" y="376.6" width="4.2" height="3"/></g><path d="M1610 369h9M1610 373.5h9M1610 378h9" stroke="#777" stroke-width="1.1"/></svg>
<div id="btabs" class="abs"></div><div id="status" class="abs"></div>
<svg class="abs" style="left:0;top:0" width="2022" height="1080" viewBox="0 0 2022 1080"><rect x="21.3" y="1039.6" width="76.3" height="19" fill="#a9acc9"/><path d="M21.3 1040h76.3" stroke="#7f83a6" stroke-width="1"/><path d="M40.3 1040v18.5M59.3 1040v18.5M78.3 1040v18.5" stroke="#9599bb" stroke-width="1"/><g fill="#8f95c2"><path d="M34.5 1043.5v11l-6.5-5.5zM27 1044h1.6v10h-1.6z"/><path d="M52.5 1043.5v11l-6.5-5.5z"/><path d="M66.5 1043.5v11l6.5-5.5z"/><path d="M84 1043.5v11l6.5-5.5zM91.4 1044h1.6v10h-1.6z"/></g><rect x="98" y="1039.6" width="55.5" height="19" fill="#fbfbfb"/><rect x="153.5" y="1039.6" width="101" height="19" fill="#d3d3d3"/><path d="M254.5 1040v18.5" stroke="#bdbdbd"/><g><path d="M1823 1080v-3M1827.5 1080v-5M1832 1080v-7M1836.5 1080v-9" stroke="#3f7fa8" stroke-width="2.6"/><path d="M1822 1075.5q12 0.5 18-9l-3-1.6 8-3.4 0.6 8.6-2.8-1.6q-7 10-20.8 9z" fill="#222"/><path d="M1827.5 1061.5l6.6 11h-13.2z" fill="#f7c52b" stroke="#a8800a" stroke-width="0.8"/><path d="M1827.5 1065v4" stroke="#222" stroke-width="1.4"/><circle cx="1827.5" cy="1070.8" r="0.8" fill="#222"/></g><circle cx="1970.8" cy="1070.2" r="1.5" fill="#444"/><g transform="translate(2008 1072) rotate(38)" fill="#f2f2f2" stroke="#666" stroke-width="1.2"><path d="M-14 -7h22l5 7-5 7h-22z"/><circle cx="-9" cy="0" r="2" fill="#fff"/><path d="M-3 -3.5h9M-3 0h9M-3 3.5h9" stroke-width="1"/></g></svg>
<span class="t" style="left:113px;top:1039.3px;font-size:15.2px;color:#333;letter-spacing:0.12px;">模型</span>
<span class="t" style="left:162px;top:1039.3px;font-size:15.2px;color:#333;letter-spacing:0.12px;">运动算例 1</span>
<span class="t" style="left:1.5px;top:1060.3px;font-size:14.5px;color:#222;letter-spacing:-0.11px;">SOLIDWORKS Premium 2021 SP5.1</span>
<span class="t" style="left:1651.7px;top:1061.3px;font-size:14.8px;color:#222;letter-spacing:-1.05px;">欠定义</span>
<span class="t" style="left:1708.4px;top:1061.3px;font-size:14.8px;color:#222;letter-spacing:-0.55px;">在编辑 装配体</span>
<span class="t" style="left:1908.4px;top:1061.3px;font-size:14.8px;color:#222;letter-spacing:-1.80px;">自定义</span>
<div class="abs" style="left:697.5px;top:51px;width:175px;height:58.5px;background:#fff;border:1px solid #d4d4d4;box-shadow:0 1px 4px rgba(0,0,0,0.18)"></div>
<svg class="abs" style="left:710px;top:42px" width="26" height="12" viewBox="0 0 26 12"><path d="M3 10l9.5-9 9.5 9" fill="#fff" stroke="#d0d0d0" stroke-width="1"/><path d="M3.5 10.5h18" stroke="#fff" stroke-width="2"/></svg>
<span class="t" style="left:707.5px;top:59.6px;font-size:14.4px;color:#111;font-weight:bold;letter-spacing:-0.42px;">旧版本文件</span>
<span class="t" style="left:707.5px;top:82.7px;font-size:14.2px;color:#222;letter-spacing:-0.34px;">此文件在保存时将转换。</span>
</body>
</html>
